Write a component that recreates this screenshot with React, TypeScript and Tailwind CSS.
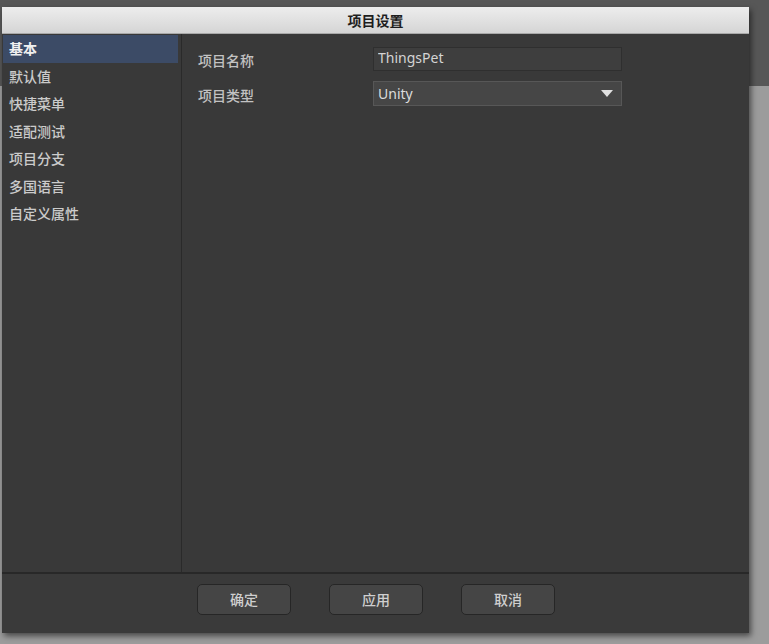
import { useState } from 'react'

const NAV = ['基本', '默认值', '快捷菜单', '适配测试', '项目分支', '多国语言', '自定义属性']

const FONT = "font-['Noto_Sans','Noto_Sans_CJK_SC',sans-serif]"

export default function App() {
  const [active, setActive] = useState(0)
  const [name, setName] = useState('ThingsPet')

  return (
    <div className={`h-[644px] w-[769px] overflow-hidden bg-[linear-gradient(to_bottom,#575757_86px,#9c9c9c_86px)] pt-[7px] pl-[2px] ${FONT}`}>
      {/* Dialog window */}
      <div className="flex h-[626px] w-[747px] flex-col bg-[#393939] shadow-[2px_3px_6px_rgba(0,0,0,0.55)]">
        {/* Title bar */}
        <div className="flex h-[27px] shrink-0 items-center justify-center border-b border-[#a9a9a9] bg-[linear-gradient(to_bottom,#ededed,#d5d5d5)]">
          <span className="text-[14px] font-bold text-[#1e1e1e]">项目设置</span>
        </div>

        {/* Body */}
        <div className="flex min-h-0 flex-1">
          <div className="flex w-[180px] shrink-0 flex-col border-r border-[#2a2a2a] bg-[#393939] pt-[1px] pl-[1px] pr-[3px]">
            {NAV.map((item, i) => (
              <button
                key={item}
                onClick={() => setActive(i)}
                className={`flex h-[27.5px] items-center pl-[6px] text-left text-[14px] ${
                  i === active ? 'bg-[#3c4b66] font-bold text-[#f0f0f0]' : 'font-medium text-[#cbcbcb]'
                }`}
              >
                {item}
              </button>
            ))}
          </div>

          <div className="flex flex-1 flex-col gap-[10px] pt-[13px] pl-[16px]">
            <div className="flex items-center">
              <span className="w-[175px] pt-[3px] text-[14px] font-medium text-[#c2c2c2]">项目名称</span>
              <input
                value={name}
                onChange={(e) => setName(e.target.value)}
                className="h-[24px] w-[249px] border border-[#2f2f2f] bg-[#3e3e3e] px-[4px] pb-[3px] text-[14px] text-[#d4d4d4] outline-none"
              />
            </div>
            <div className="flex items-center">
              <span className="w-[175px] pt-[3px] text-[14px] font-medium text-[#c2c2c2]">项目类型</span>
              <div className="flex h-[25px] w-[249px] items-center justify-between border border-[#575757] bg-[#464646] pr-[8px] pl-[4px]">
                <span className="pb-[1px] text-[14px] text-[#dcdcdc]">Unity</span>
                <svg width="12" height="7" viewBox="0 0 12 7">
                  <polygon points="0,0 12,0 6,7" fill="#e0e0e0" />
                </svg>
              </div>
            </div>
          </div>
        </div>

        {/* Footer */}
        <div className="flex h-[61px] shrink-0 items-start gap-[38px] border-t-2 border-[#282828] bg-[#3a3a3a] pt-[10px] pl-[195px]">
          {['确定', '应用', '取消'].map((b) => (
            <button
              key={b}
              className="h-[31px] w-[94px] rounded-[5px] border border-[#262626] bg-[#454545] text-[14px] font-medium text-[#cfcfcf]"
            >
              {b}
            </button>
          ))}
        </div>
      </div>
    </div>
  )
}
